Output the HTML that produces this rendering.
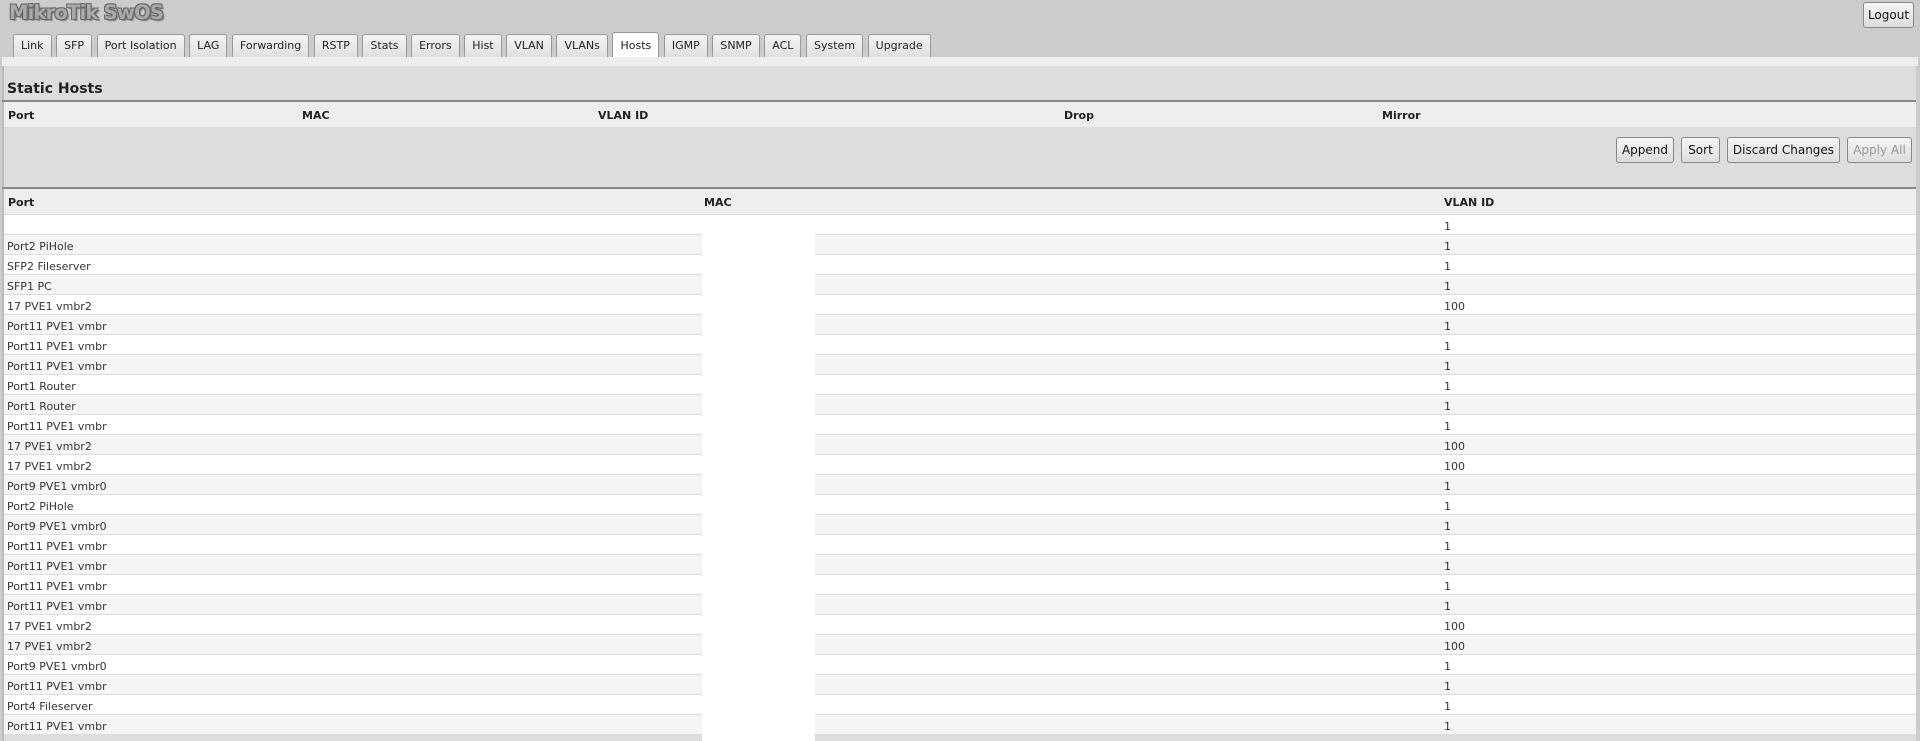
<!DOCTYPE html>
<html><head><meta charset="utf-8"><style>
*{box-sizing:border-box}
body{margin:0;width:1920px;height:741px;overflow:hidden;background:#ccc;font-family:"DejaVu Sans","Liberation Sans",sans-serif;font-size:11px;color:#222;position:relative}
.title{position:absolute;left:9px;top:1px;font:bold 19.5px "DejaVu Sans",sans-serif;color:#aaa;letter-spacing:-0.8px;text-shadow:-1px -1px 0 #666,1px -1px 0 #666,-1px 1px 0 #666,1px 1px 0 #666,2px 2px 1px #888}
.logout{position:absolute;left:1863px;top:2px;width:51px;height:26px;border:1px solid #888;border-radius:3px;background:linear-gradient(#f6f6f6,#ddd);font-size:12px;line-height:24px;text-align:center;color:#111}
.tabs{position:absolute;left:13px;top:34px;height:23px;display:flex}
.tab{height:23px;border:1px solid #999;border-bottom:none;border-radius:3px 3px 0 0;background:linear-gradient(#f4f4f4,#e0e0e0);padding:0 7px;margin-right:4.6px;line-height:22px;font-size:11px;color:#222}
.tab.act{background:#fff;height:25px;margin-top:-2px;line-height:26px}
.strip{position:absolute;left:2px;top:57px;width:1916px;height:9px;background:#eee}
.panel{position:absolute;left:2px;top:66px;width:1914px;height:675px;background:#ddd;border-left:2px solid #bbb}
.h2{position:absolute;left:7px;top:81px;font-weight:bold;font-size:14px}
.line{position:absolute;left:2px;width:1914px;height:2px;background:#888}
.hrow{position:absolute;left:4px;width:1912px;height:25px;background:#eee;font-weight:bold;font-size:11px}
.hrow span,.row span{position:absolute;top:7px}
.btn{position:absolute;top:137px;height:26px;border:1px solid #888;border-radius:3px;background:linear-gradient(#f6f6f6,#ddd);font-size:12px;line-height:24px;text-align:center;color:#111}
.row{position:absolute;left:4px;width:1912px;height:20px;border-bottom:1px solid #ddd;color:#333;font-size:11px}
.row span{top:5px}
.mask{position:absolute;left:702px;top:216px;width:113px;height:525px;background:#fff}
</style></head><body>
<div class="title">MikroTik SwOS</div>
<div class="logout">Logout</div>
<div class="tabs">
<div class="tab">Link</div><div class="tab">SFP</div><div class="tab">Port Isolation</div><div class="tab">LAG</div><div class="tab">Forwarding</div><div class="tab">RSTP</div><div class="tab">Stats</div><div class="tab">Errors</div><div class="tab">Hist</div><div class="tab">VLAN</div><div class="tab">VLANs</div><div class="tab act">Hosts</div><div class="tab">IGMP</div><div class="tab">SNMP</div><div class="tab">ACL</div><div class="tab">System</div><div class="tab">Upgrade</div>
</div>
<div class="strip"></div>
<div class="panel"></div>
<div class="h2">Static Hosts</div>
<div class="line" style="top:100px"></div>
<div class="hrow" style="top:102px"><span style="left:4px">Port</span><span style="left:298px">MAC</span><span style="left:594px">VLAN ID</span><span style="left:1060px">Drop</span><span style="left:1378px">Mirror</span></div>
<div class="btn" style="left:1616px;width:58px">Append</div>
<div class="btn" style="left:1681px;width:39px">Sort</div>
<div class="btn" style="left:1727px;width:113px">Discard Changes</div>
<div class="btn" style="left:1847px;width:65px;color:#999">Apply All</div>
<div class="line" style="top:187px"></div>
<div class="hrow" style="top:189px"><span style="left:4px">Port</span><span style="left:700px">MAC</span><span style="left:1440px">VLAN ID</span></div>
<div id="rows"></div>
<script>
var d=[["",1],["Port2 PiHole",1],["SFP2 Fileserver",1],["SFP1 PC",1],["17 PVE1 vmbr2",100],["Port11 PVE1 vmbr",1],["Port11 PVE1 vmbr",1],["Port11 PVE1 vmbr",1],["Port1 Router",1],["Port1 Router",1],["Port11 PVE1 vmbr",1],["17 PVE1 vmbr2",100],["17 PVE1 vmbr2",100],["Port9 PVE1 vmbr0",1],["Port2 PiHole",1],["Port9 PVE1 vmbr0",1],["Port11 PVE1 vmbr",1],["Port11 PVE1 vmbr",1],["Port11 PVE1 vmbr",1],["Port11 PVE1 vmbr",1],["17 PVE1 vmbr2",100],["17 PVE1 vmbr2",100],["Port9 PVE1 vmbr0",1],["Port11 PVE1 vmbr",1],["Port4 Fileserver",1],["Port11 PVE1 vmbr",1]];
var h="";d.forEach(function(r,i){h+='<div class="row" style="top:'+(215+i*20)+'px;background:'+(i%2?'#f5f5f5':'#fff')+'"><span style="left:3px">'+r[0]+'</span><span style="left:1440px">'+r[1]+'</span></div>';});
document.getElementById("rows").innerHTML=h;
</script>
<div class="mask"></div>
</body></html>
